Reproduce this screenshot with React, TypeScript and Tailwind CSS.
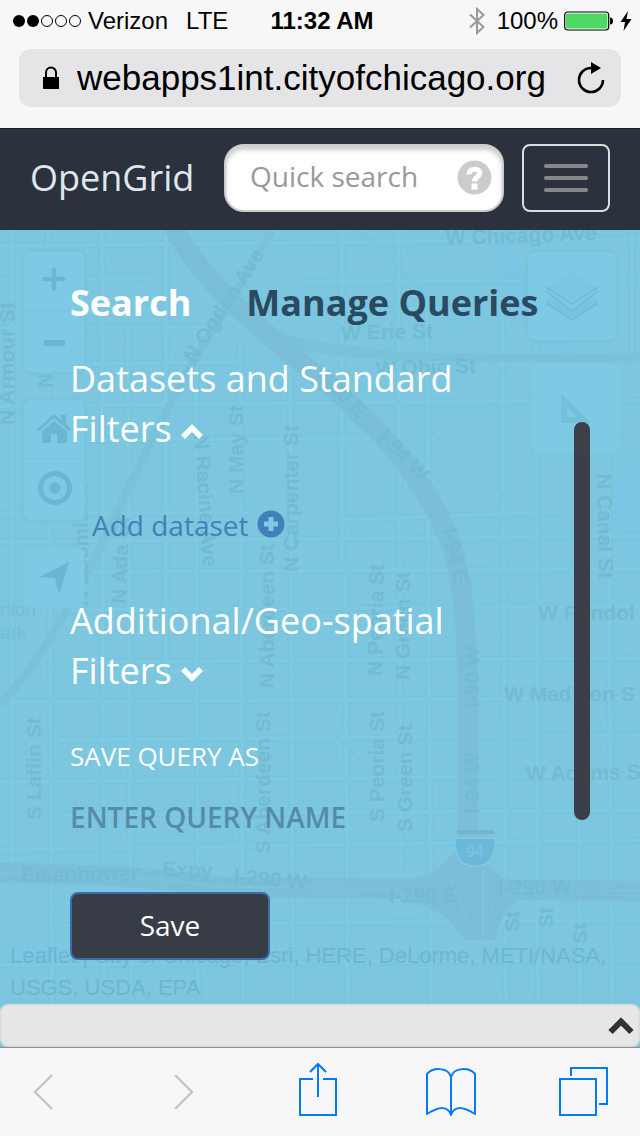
import React from "react";

const appFont = "font-['Open_Sans',sans-serif]";
const systemFont = "font-['Liberation_Sans',sans-serif]";

function StatusBar() {
  return (
    <div className="flex h-[41px] items-center pl-3 pr-2 text-2xl text-black">
      <div className="flex flex-1 items-center">
        <svg width="70" height="14" viewBox="0 0 70 14" aria-hidden="true">
          <circle cx="7" cy="7" r="6" />
          <circle cx="21" cy="7" r="6" />
          <g fill="none" stroke="#000" strokeWidth="1">
            <circle cx="35" cy="7" r="5.5" />
            <circle cx="49" cy="7" r="5.5" />
            <circle cx="63" cy="7" r="5.5" />
          </g>
        </svg>
        <span className="ml-1.5">Verizon</span>
        <span className="ml-[18px]">LTE</span>
      </div>
      <span className="font-bold">11:32 AM</span>
      <div className="flex flex-1 items-center justify-end">
        <svg width="16" height="28" viewBox="0 0 16 28" fill="none" stroke="#999" strokeWidth="2" aria-hidden="true">
          <path d="M1 7.5 L14.5 20 L8 26 V2 L14.5 8 L1 20.5" />
        </svg>
        <span className="ml-3">100%</span>
        <svg className="ml-1.5" width="50" height="20" viewBox="0 0 50 20" aria-hidden="true">
          <rect x="0.7" y="1" width="44" height="18" rx="3" fill="#fff" stroke="#000" strokeWidth="1.2" />
          <rect x="2" y="2.5" width="41.4" height="15" rx="1.5" fill="#4cd964" />
          <path d="M46 6.5 q3 0 3 3.5 t-3 3.5 z" />
        </svg>
        <svg className="ml-1.5" width="12" height="20" viewBox="0 0 12 20" aria-hidden="true">
          <path d="M8 0 L0.5 11 H5 L3.5 20 L11.5 8 H6.5 z" />
        </svg>
      </div>
    </div>
  );
}

function AddressBar() {
  return (
    <div className="mx-[19px] mt-2 flex h-[58px] items-center rounded-xl bg-[#e5e5e7] pl-6 pr-4">
      <svg width="16" height="24" viewBox="0 0 16 24" aria-hidden="true">
        <rect x="0" y="11" width="16" height="12" />
        <path d="M3 12 V6.5 a5 5 0 0 1 10 0 V12" fill="none" stroke="#000" strokeWidth="2" />
      </svg>
      <span className="ml-[18px] text-[35px] leading-10 text-black">webapps1int.cityofchicago.org</span>
      <button type="button" aria-label="Reload" className="ml-auto">
        <svg width="28" height="32" viewBox="0 0 28 32" aria-hidden="true">
          <path d="M15 6 H14 a12 12 0 1 0 12 12" fill="none" stroke="#000" strokeWidth="2.6" />
          <path d="M14 0 L24 6 L14 12 z" />
        </svg>
      </button>
    </div>
  );
}

function NavBar() {
  return (
    <nav className="flex h-[102px] items-center border-t border-[#181d24] bg-[#2c323d] px-[30px] pb-[3px]">
      <a href="#" className="text-4xl text-[#dfe8ef]">OpenGrid</a>
      <div className="relative ml-auto">
        <input
          type="text"
          aria-label="Quick search"
          placeholder="Quick search"
          className="block h-[68px] w-[280px] rounded-[20px] border-2 border-[#ccc] bg-white pb-1 pl-6 pr-14 text-[28px] text-[#555] shadow-[inset_0_4px_4px_rgba(0,0,0,0.2)] placeholder:text-[#999]"
        />
        <button type="button" aria-label="Help" className="absolute right-3 top-4">
          <svg width="35" height="35" viewBox="0 0 35 35" aria-hidden="true">
            <circle cx="17.5" cy="17.5" r="17" fill="#ccc" />
            <path d="M12.2 14.5 C11.5 7 24.5 8 22.5 14 C21.5 17 17.5 17 17.5 21.5" fill="none" stroke="#fff" strokeWidth="5" />
            <rect x="14.5" y="23.5" width="6" height="6" fill="#fff" />
          </svg>
        </button>
      </div>
      <button
        type="button"
        aria-label="Toggle navigation"
        className="ml-[18px] flex h-[68px] w-[88px] flex-col items-center justify-center gap-2 rounded-lg border-2 border-[#ddd]"
      >
        <span className="h-1 w-11 rounded-sm bg-[#888]" />
        <span className="h-1 w-11 rounded-sm bg-[#888]" />
        <span className="h-1 w-11 rounded-sm bg-[#888]" />
      </button>
    </nav>
  );
}

const streets = [
  "M0 16 L640 9", "M0 50 L150 48", "M300 52 L640 50", "M0 98 L210 97", "M340 80 L470 78", "M80 134 L240 132",
  "M0 176 L240 174 L640 170", "M60 210 L400 208", "M330 290 L560 282", "M0 284 L250 282", "M0 312 L640 306",
  "M60 342 L640 339", "M60 380 L640 376", "M90 432 L640 428", "M0 472 L640 468", "M60 510 L640 505",
  "M0 552 L640 545", "M60 585 L640 580", "M0 620 L640 610", "M60 695 L640 690", "M0 735 L640 730",
  "M12 0 V640", "M48 0 L52 774", "M102 0 L104 774", "M128 100 L131 774", "M166 0 V450", "M196 100 L198 774",
  "M240 110 L243 774", "M290 120 L293 774", "M342 0 V330", "M345 340 L348 774", "M398 0 L401 640", "M427 70 L431 774",
  "M502 80 L506 774", "M536 0 L538 774", "M576 130 L580 774", "M608 170 L612 774", "M632 0 V130",
];

const freeways = [
  "M172 -6 C200 50 250 90 310 140 C380 196 440 260 458 340 C470 390 468 500 468 600",
  "M0 643 C60 643 150 646 220 657 L640 661",
];

const ramps = [
  "M272 0 C240 60 190 130 160 195 C120 270 70 400 0 475",
  "M240 84 C280 125 340 130 640 127",
  "M260 100 C300 118 340 116 400 127",
];

type Label = { text: string; x: number; y: number; angle: number };

const labels: Label[] = [
  { text: "W Chicago Ave", x: 446, y: 15, angle: -2 },
  { text: "W Erie St", x: 341, y: 110, angle: -1 },
  { text: "W Ohio St", x: 376, y: 146, angle: -2 },
  { text: "W Randol", x: 538, y: 390, angle: 0 },
  { text: "W Madison S", x: 504, y: 471, angle: 0 },
  { text: "W Adams S", x: 526, y: 551, angle: -1 },
  { text: "N Armour St", x: 14, y: 195, angle: -90 },
  { text: "N Ogden Ave", x: 194, y: 134, angle: -57 },
  { text: "N May St", x: 243, y: 264, angle: -90 },
  { text: "N Carpenter St", x: 298, y: 342, angle: -90 },
  { text: "N Racine Ave", x: 194, y: 205, angle: 86 },
  { text: "N Ada St", x: 126, y: 374, angle: -88 },
  { text: "N Bishop St", x: 52, y: 158, angle: -90 },
  { text: "N Loomis St", x: 88, y: 376, angle: -90 },
  { text: "N Aberdeen St", x: 274, y: 458, angle: -90 },
  { text: "N Peoria St", x: 382, y: 446, angle: -89 },
  { text: "N Green St", x: 410, y: 450, angle: -90 },
  { text: "S Peoria St", x: 384, y: 592, angle: -90 },
  { text: "S Green St", x: 412, y: 602, angle: -90 },
  { text: "S Aberdeen St", x: 270, y: 624, angle: -90 },
  { text: "S Laflin St", x: 41, y: 590, angle: -90 },
  { text: "N Canal St", x: 597, y: 244, angle: 89 },
  { text: "I-90 E", x: 318, y: 150, angle: 44 },
  { text: "I-94 W", x: 377, y: 208, angle: 46 },
  { text: "I-94 E", x: 442, y: 300, angle: 77 },
  { text: "I-90 W", x: 479, y: 478, angle: -90 },
  { text: "I-94 W", x: 479, y: 584, angle: -90 },
  { text: "Eisenhower", x: 21, y: 652, angle: -1 },
  { text: "Expy", x: 162, y: 646, angle: 2 },
  { text: "I-290 W", x: 233, y: 653, angle: 5 },
  { text: "I-290 E", x: 389, y: 673, angle: -1 },
  { text: "I-290 W", x: 498, y: 665, angle: -1 },
  { text: "St", x: 519, y: 702, angle: -90 },
  { text: "St", x: 553, y: 698, angle: -90 },
  { text: "St", x: 587, y: 714, angle: -90 },
];

function StreetMap() {
  return (
    <svg
      className="absolute inset-0 h-full w-full"
      viewBox="0 0 640 774"
      preserveAspectRatio="xMidYMin slice"
      aria-hidden="true"
    >
      <rect width="640" height="774" fill="#7cc7df" />
      <path d="M500 0 C494 40 510 90 548 120 L580 126 C540 80 520 50 512 0z M640 220 C600 260 612 310 640 340z" fill="#7ac5e3" />
      <g fill="none">
        {streets.map((d) => (
          <path key={d} d={d} stroke="#79c4dc" strokeWidth="7" />
        ))}
        {streets.map((d) => (
          <path key={d} d={d} stroke="#7dc9e2" strokeWidth="4" />
        ))}
        <path d="M360 0 L530 170 M385 160 L520 280 M600 170 L640 230 M330 500 L360 530" stroke="#79c4dc" strokeWidth="2" />
        {ramps.map((d) => (
          <path key={d} d={d} stroke="#78c1d9" strokeWidth="8" />
        ))}
        {freeways.map((d) => (
          <path key={d} d={d} stroke="#7abed8" strokeWidth="20" />
        ))}
        <path d="M0 643 C60 643 150 646 220 657 L640 661" stroke="#7cc3db" strokeWidth="2" />
      </g>
      <path
        d="M457 600 H486 L488 635 C496 645 504 650 520 654 V668 C508 675 498 690 496 710 H464 C452 690 440 676 400 671 V652 C430 648 445 635 457 618z"
        fill="#7abed8"
      />
      <path d="M483 640 V710 M450 650 L472 700 M508 650 L486 690" fill="none" stroke="#7cc3db" strokeWidth="2" />
      <g fill="#72bbd3" className="font-['Liberation_Sans',sans-serif] text-[21px] font-bold">
        {labels.map((l) => (
          <text key={`${l.text}-${l.x}-${l.y}`} transform={`translate(${l.x} ${l.y}) rotate(${l.angle})`}>
            {l.text}
          </text>
        ))}
      </g>
      <g fill="#74bdd5" className="font-['Liberation_Sans',sans-serif] text-[19px]">
        <text x="0" y="386">nion</text>
        <text x="0" y="409">ark</text>
      </g>
      <path d="M455 608 H495 C497 640 475 635 475 637 C474 635 453 640 455 608z" fill="#6bb8da" stroke="#7dc9e0" strokeWidth="2" />
      <path d="M457 600 H494 V604 H457z" fill="#75b3cf" />
      <text x="466" y="627" fill="#7ac5df" className="font-['Liberation_Sans',sans-serif] text-[16px]">94</text>
    </svg>
  );
}

const mapGroup = "absolute flex flex-col divide-y-2 divide-[#7ac6e0] rounded-md bg-[#7ccae4] text-[#6bb6d0]";
const mapButton = "flex h-[60px] w-[60px] items-center justify-center";

function MapControls() {
  return (
    <>
      <div className={`${mapGroup} left-6 top-[22px] ring-3 ring-[#79c4dc]`}>
        <button type="button" aria-label="Zoom in" className={`${mapButton} pb-1`}>
          <svg width="24" height="24" viewBox="0 0 24 24" stroke="currentColor" strokeWidth="4.5" strokeLinecap="round">
            <path d="M2.5 12 H21.5 M12 2.5 V21.5" />
          </svg>
        </button>
        <button type="button" aria-label="Zoom out" className={mapButton}>
          <svg width="24" height="24" viewBox="0 0 24 24" fill="currentColor">
            <rect x="2" y="10" width="21" height="6" rx="1" />
          </svg>
        </button>
      </div>
      <div className={`${mapGroup} left-6 top-[170px] ring-3 ring-[#79c4dc]`}>
        <button type="button" aria-label="Home extent" className={mapButton}>
          <svg width="36" height="32" viewBox="0 0 36 32" fill="currentColor">
            <path d="M18 1 L1 16 L3 18 L18 5 L33 18 L35 16 L30 11.5 V2 H25 V7z" />
            <path d="M18 8 L6 18.5 V30 H15 V21 H21 V30 H31 V18.5z" />
          </svg>
        </button>
        <button type="button" aria-label="Center map" className={`${mapButton} pb-1`}>
          <svg width="36" height="36" viewBox="0 0 36 36" fill="none" stroke="currentColor" strokeWidth="5">
            <circle cx="19" cy="18" r="14.5" />
            <circle cx="19" cy="18" r="5.5" fill="currentColor" stroke="none" />
          </svg>
        </button>
      </div>
      <div className={`${mapGroup} left-6 top-[318px]`}>
        <button type="button" aria-label="Locate me" className={mapButton}>
          <svg width="32" height="34" viewBox="0 0 32 34" fill="currentColor">
            <path d="M31 1 L1 16 L17 17 L21 33z" />
          </svg>
        </button>
      </div>
      <button
        type="button"
        aria-label="Layers"
        className="absolute right-6 top-[22px] flex h-[88px] w-[88px] items-center justify-center rounded-md bg-[#7ccae4] ring-3 ring-[#79c4dc]"
      >
        <svg width="52" height="52" viewBox="0 0 52 52">
          <path d="M26 2 L50 18 L26 34 L2 18z" fill="#7bc7e1" />
          <path d="M0 29 V32 L26 50 L52 32 V29 L46 25 L26 39 L6 25z" fill="#79c3dd" />
          <g fill="none" stroke="#72bbd5" strokeWidth="1.5">
            <path d="M0 17 L26 34 L52 17 M0 21 L26 41 L52 21 M0 33 L26 50 L52 33" />
          </g>
        </svg>
      </button>
      <button
        type="button"
        aria-label="Measure"
        className="absolute right-5 top-[134px] flex h-[88px] w-[88px] items-center justify-center rounded-lg bg-[#7ccae4]"
      >
        <svg width="32" height="32" viewBox="0 0 32 32" fill="#74bfd9" fillRule="evenodd">
          <path d="M1 1 L31 31 H1z M7 15 V25 H17z" />
        </svg>
      </button>
      <p className={`${systemFont} absolute bottom-0 left-2.5 right-5 text-[22px] leading-8 text-[#6cb6ce]`}>
        <a href="#" className="text-[#65b7da]">Leaflet</a> | City of Chicago, Esri, HERE, DeLorme, METI/NASA, USGS, USDA, EPA
      </p>
    </>
  );
}

function Chevron({ up = false }: { up?: boolean }) {
  return (
    <svg className="ml-2 inline-block" width="24" height="20" viewBox="0 0 24 20" fill="none" stroke="currentColor" strokeWidth="5.5" aria-hidden="true">
      {up ? <path d="M3 15 L12 6 L21 15" /> : <path d="M3 5 L12 14 L21 5" />}
    </svg>
  );
}

function SearchPanel() {
  return (
    <form className="relative pb-11 pl-[70px] pr-[90px] pt-12 text-white" onSubmit={(e) => e.preventDefault()}>
      <div className="flex gap-[55px] whitespace-nowrap text-4xl/[50px] font-bold">
        <a href="#search">Search</a>
        <a href="#manage" className="text-[#2a4a62]">Manage Queries</a>
      </div>
      <h2 className="mt-[26px] text-4xl/[50px]">
        Datasets and Standard <span className="whitespace-nowrap">Filters<Chevron up /></span>
      </h2>
      <button type="button" className="ml-[22px] mt-[51px] flex h-10 items-center gap-2 text-[28px] text-[#4280b9]">
        Add dataset
        <svg className="mb-0.5" width="28" height="28" viewBox="0 0 28 28" aria-hidden="true">
          <circle cx="14" cy="14" r="13.5" fill="#4280b9" />
          <path d="M7 14 H21 M14 7 V21" stroke="#7ccae5" strokeWidth="5" />
        </svg>
      </button>
      <h2 className="mt-[51px] text-4xl/[50px]">
        Additional/Geo-spatial <span className="whitespace-nowrap">Filters<Chevron /></span>
      </h2>
      <label htmlFor="query-name" className="mt-[42px] block text-[26px]/9">SAVE QUERY AS</label>
      <input
        id="query-name"
        type="text"
        placeholder="ENTER QUERY NAME"
        className="mt-[19px] block h-12 w-full bg-transparent text-[28px] font-semibold text-[#2a4a62] placeholder:text-[#568ba8]"
      />
      <button
        type="submit"
        className="mt-[51px] block h-[68px] w-[200px] rounded-lg border-2 border-[#3a6ea5] bg-[#35353e]/95 pb-0.5 text-[28px]"
      >
        Save
      </button>
      <div className="absolute right-[50px] top-48 h-[398px] w-4 rounded-full bg-[#383840]/95" aria-hidden="true" />
    </form>
  );
}

function BrowserToolbar() {
  return (
    <div className="flex h-[89px] items-center justify-between border-t border-[#8e8e8e] bg-[#f7f7f7] pl-[26px] pr-[31px]">
      <button type="button" aria-label="Back">
        <svg width="50" height="54" viewBox="0 0 50 54" fill="none" stroke="#c4c4c4" strokeWidth="2.4">
          <path d="M26 10 L9 27 L26 44" />
        </svg>
      </button>
      <button type="button" aria-label="Forward">
        <svg width="50" height="54" viewBox="0 0 50 54" fill="none" stroke="#c4c4c4" strokeWidth="2.4">
          <path d="M16 10 L33 27 L16 44" />
        </svg>
      </button>
      <button type="button" aria-label="Share">
        <svg className="overflow-visible" width="50" height="54" viewBox="0 0 50 54" fill="none" stroke="#007aff" strokeWidth="2">
          <path d="M20 14 H7 V50 H43 V14 H30 M25 32 V0 M17 7 L25 -1 L33 7" />
        </svg>
      </button>
      <button type="button" aria-label="Bookmarks">
        <svg width="50" height="54" viewBox="0 0 50 54" fill="none" stroke="#007aff" strokeWidth="2" strokeLinejoin="round">
          <path d="M25 50 C22 41 14 41 1 49 V9 C7 2 22 2 25 12 C28 2 43 2 49 9 V49 C36 41 28 41 25 50z M25 12 V50" />
        </svg>
      </button>
      <button type="button" aria-label="Tabs">
        <svg width="50" height="54" viewBox="0 0 50 54" fill="none" stroke="#007aff" strokeWidth="2">
          <path d="M1 14 H37 V50 H1z M12 11 V3 H48 V39 H40" />
        </svg>
      </button>
    </div>
  );
}

export default function App() {
  return (
    <div className={`${appFont} flex min-h-screen flex-col`}>
      <header className={`${systemFont} bg-[#f7f7f7] pb-[21px]`}>
        <StatusBar />
        <AddressBar />
      </header>
      <NavBar />
      <main className="relative flex-1 overflow-hidden bg-[#7cc7df]">
        <StreetMap />
        <MapControls />
        <SearchPanel />
      </main>
      <div className="bg-[#7cc7df]">
        <div className="flex h-[43px] items-center justify-end rounded-lg border-2 border-[#ddd] bg-[#e7e7e7] pr-1">
          <button type="button" aria-label="Expand results">
            <svg width="26" height="18" viewBox="0 0 26 18" fill="none" stroke="#333" strokeWidth="6">
              <path d="M2.5 15 L13 4.5 L23.5 15" />
            </svg>
          </button>
        </div>
      </div>
      <BrowserToolbar />
    </div>
  );
}
